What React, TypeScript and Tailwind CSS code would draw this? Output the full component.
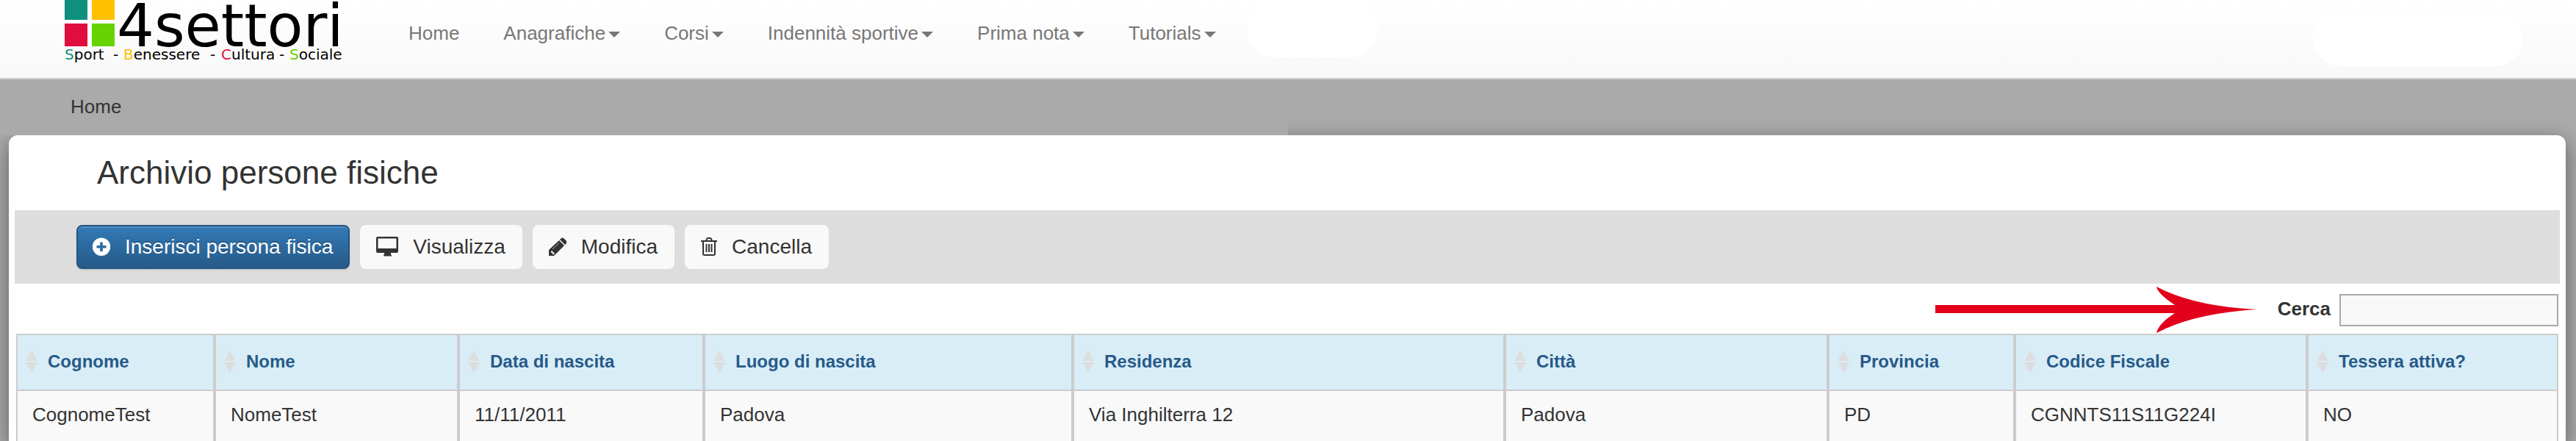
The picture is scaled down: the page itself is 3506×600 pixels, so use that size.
import type { ReactNode } from 'react';

interface Column {
  label: string;
  width: string;
}

const menu = [
  { label: 'Home', dropdown: false },
  { label: 'Anagrafiche', dropdown: true },
  { label: 'Corsi', dropdown: true },
  { label: 'Indennità sportive', dropdown: true },
  { label: 'Prima nota', dropdown: true },
  { label: 'Tutorials', dropdown: true },
];

const columns: Column[] = [
  { label: 'Cognome', width: 'w-[270px]' },
  { label: 'Nome', width: 'w-[332px]' },
  { label: 'Data di nascita', width: 'w-[334px]' },
  { label: 'Luogo di nascita', width: 'w-[502px]' },
  { label: 'Residenza', width: 'w-[588px]' },
  { label: 'Città', width: 'w-[440px]' },
  { label: 'Provincia', width: 'w-[254px]' },
  { label: 'Codice Fiscale', width: 'w-[398px]' },
  { label: 'Tessera attiva?', width: 'w-[342px]' },
];

const people = [
  ['CognomeTest', 'NomeTest', '11/11/2011', 'Padova', 'Via Inghilterra 12', 'Padova', 'PD', 'CGNNTS11S11G224I', 'NO'],
];

function Logo() {
  return (
    <svg width="380" height="90" viewBox="0 0 380 90" role="img" aria-label="4settori" className="shrink-0">
      <rect x="0" y="-4" width="31" height="31" fill="#0f907f" />
      <rect x="37" y="-4" width="31" height="31" fill="#ffc000" />
      <rect x="0" y="32" width="31" height="31" fill="#df0e3f" />
      <rect x="37" y="32" width="31" height="31" fill="#67d300" />
      <text x="71" y="63" fontFamily="DejaVu Sans, sans-serif" fontSize="80" fill="#000">
        4settori
      </text>
      <g fontFamily="DejaVu Sans, sans-serif" fontSize="20" fill="#000">
        <text x="0" y="81"><tspan fill="#0f907f">S</tspan>port</text>
        <text x="66" y="81">-</text>
        <text x="80" y="81"><tspan fill="#ffc000">B</tspan>enessere</text>
        <text x="198" y="81">-</text>
        <text x="213" y="81"><tspan fill="#df0e3f">C</tspan>ultura</text>
        <text x="292" y="81">-</text>
        <text x="306" y="81"><tspan fill="#67d300">S</tspan>ociale</text>
      </g>
    </svg>
  );
}

function Caret() {
  return (
    <svg width="16" height="8" viewBox="0 0 16 8" className="mt-1 fill-current">
      <path d="M0 0h16L8 8z" />
    </svg>
  );
}

function PlusIcon() {
  return (
    <svg width="24" height="26" viewBox="0 0 24 26">
      <path fill="currentColor" fillRule="evenodd" d="M12 0.5a12 12 0 1 0 0 24.5a12 12 0 0 0 0-24.5zM10.2 6.5h3.6v4.4h4.7v3.6h-4.7v4.5h-3.6v-4.5H5.500v-3.6h4.700z" />
    </svg>
  );
}

function DesktopIcon() {
  return (
    <svg width="30" height="28" viewBox="0 0 30 28">
      <path fill="currentColor" fillRule="evenodd" d="M2 0h26a2 2 0 0 1 2 2v18a2 2 0 0 1-2 2h-8v2q1 .5 1 2.500H10q0-2 1-2.500v-2H2a2 2 0 0 1-2-2V2a2 2 0 0 1 2-2zM2.500 2.500v13.500h25V2.500z" />
    </svg>
  );
}

function PencilIcon() {
  return (
    <svg width="24" height="26" viewBox="0 0 24 26">
      <path fill="currentColor" fillRule="evenodd" d="M0 25v-8L14 4l7 7L7 25zM3 19v2h2v2h2l1-1l-4-4z" />
      <path fill="currentColor" d="M15 3l2-2q2-1 3 0l4 4q1 1 0 3l-2 2z" />
      <path stroke="#f9f9f9" strokeOpacity="0.6" d="M5 16L14 7.500" />
    </svg>
  );
}

function TrashIcon() {
  return (
    <svg width="22" height="26" viewBox="0 0 22 26" fill="none" stroke="currentColor" strokeWidth="2">
      <path d="M0 5h22M7 5l1-3q.5-1 1.500-1h3q1 0 1.500 1l1 3M3 5v17q0 2 2 2h12q2 0 2-2V5M7.500 9v11M11 9v11M14.500 9v11" />
    </svg>
  );
}

function SortIcon() {
  return (
    <svg width="16" height="30" viewBox="0 0 16 30" className="shrink-0 fill-[#dddddd]">
      <path d="M8 0l8 14H0zM0 16h16L8 30z" />
    </svg>
  );
}

function ToolButton({ icon, children, primary = false }: { icon: ReactNode; children: ReactNode; primary?: boolean }) {
  return (
    <button
      type="button"
      className={`flex h-[60px] items-center gap-5 rounded-lg border-2 pl-5 pr-[21px] text-[28px] leading-10 ${
        primary
          ? 'border-[#245580] bg-linear-to-b from-[#337ab7] to-[#265a88] text-white shadow-[inset_0_2px_0_rgba(255,255,255,0.15),0_2px_2px_rgba(0,0,0,0.08)] text-shadow-[0_-2px_0_rgba(0,0,0,0.2)]'
          : 'border-[#f9f9f9] bg-[#f9f9f9] text-[#333333]'
      }`}
    >
      {icon}
      {children}
    </button>
  );
}

export default function App() {
  return (
    <div className="flex h-screen flex-col overflow-hidden bg-[#aaaaaa] font-['Liberation_Sans',Arial,sans-serif] text-[26px] leading-9 text-[#333333]">
      <header className="flex h-[108px] shrink-0 items-start border-b-2 border-[#cccccc] bg-linear-to-b from-white to-[#f8f8f8] pl-[88px]">
        <Logo />
        <nav className="ml-[58px] flex pt-[27px] text-[#777777]">
          {menu.map((item) => (
            <a key={item.label} href="#" className="flex items-center gap-1 px-[30px]">
              {item.label}
              {item.dropdown && <Caret />}
            </a>
          ))}
        </nav>
        <div className="ml-3 mt-0.5 h-[76px] w-[178px] rounded-[36px] bg-white" />
        <div className="ml-auto mr-[72px] mt-4 h-[74px] w-[286px] rounded-full bg-white" />
      </header>

      {/* Breadcrumb */}
      <div className="relative z-10 h-[76px] w-1/2 shrink-0 bg-[#aaaaaa] pl-24 pt-[19px]">
        <a href="#">Home</a>
      </div>

      <main className="ml-3 mr-[14px] flex-1 rounded-t-xl bg-white px-2 shadow-[0_8px_28px_rgba(0,0,0,0.45)]">
        <h1 className="pl-28 py-[27px] text-[44px] leading-12">Archivio persone fisiche</h1>

        <div className="flex h-[100px] items-center gap-[14px] bg-[#dddddd] pl-[84px]">
          <ToolButton primary icon={<PlusIcon />}>Inserisci persona fisica</ToolButton>
          <ToolButton icon={<DesktopIcon />}>Visualizza</ToolButton>
          <ToolButton icon={<PencilIcon />}>Modifica</ToolButton>
          <ToolButton icon={<TrashIcon />}>Cancella</ToolButton>
        </div>

        <div className="flex h-[68px] items-center justify-end pr-0.5 pb-0 pt-1">
          <svg width="438" height="64" viewBox="0 0 438 64" className="mr-7 fill-[#e2001a]">
            <path d="M0 25h326Q303 10 301 0Q352 27 438 31Q352 36 301 63Q304 50 326 36H0z" />
          </svg>
          <label htmlFor="cerca" className="mr-3 pb-1 font-bold">Cerca</label>
          <input id="cerca" type="search" className="h-11 w-[298px] border-2 border-[#aaaaaa] bg-[#f8f8f8] px-2 outline-none" />
        </div>

        <div className="px-0.5">
          <table className="w-full table-fixed border-separate border-spacing-0 border-t-2 border-[#cccccc]">
            <thead>
              <tr>
                {columns.map((col) => (
                  <th key={col.label} scope="col" className={`${col.width} h-[76px] border-x-2 border-b-2 border-[#cccccc] bg-[#d9edf7] pb-0.5 pl-[11px] text-left`}>
                    <button type="button" className="flex items-center gap-[14px] text-[24px] leading-9 font-bold text-[#265a88]">
                      <SortIcon />
                      {col.label}
                    </button>
                  </th>
                ))}
              </tr>
            </thead>
            <tbody>
              {people.map((row) => (
                <tr key={row[7]}>
                  {row.map((value, i) => (
                    <td key={columns[i].label} className="border-x-2 border-b-2 border-[#cccccc] bg-[#f9f9f9] px-5 pt-[14px] pb-[18px]">
                      {value}
                    </td>
                  ))}
                </tr>
              ))}
            </tbody>
          </table>
        </div>
      </main>
    </div>
  );
}
